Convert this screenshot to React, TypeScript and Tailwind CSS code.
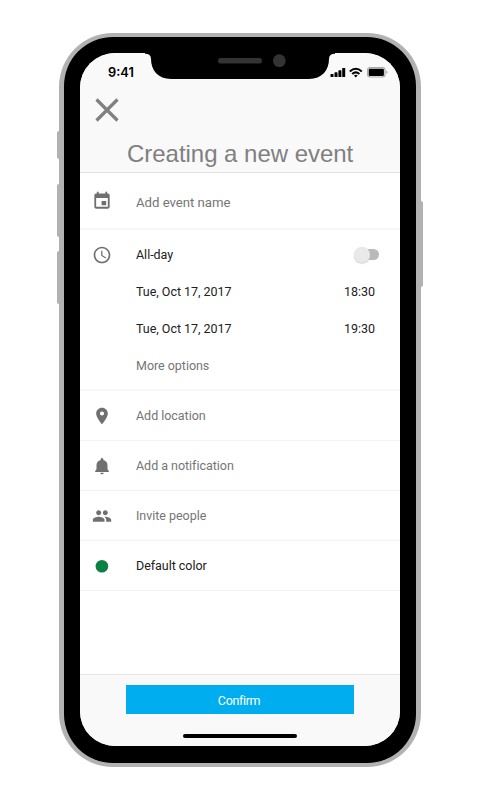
import type { ReactNode } from "react";

const paths = {
  event:
    "M17 12h-5.5v5H17v-5zM16 1v2H8V1H5.8v2H5c-1.3 0-2.2.9-2.2 2V19c0 1.1.9 2.2 2.2 2.2h14c1.1 0 2.2-.9 2.2-2.2V5c0-1.1-.9-2-2.2-2h-.8V1H16zm3 18H5V8.4h14V19z",
  clock:
    "M11.99 2C6.47 2 2 6.48 2 12s4.47 10 9.99 10C17.52 22 22 17.52 22 12S17.52 2 11.99 2zM12 20c-4.42 0-8-3.58-8-8s3.58-8 8-8 8 3.58 8 8-3.58 8-8 8zM12.5 7H11v6l5.25 3.15.75-1.23-4.5-2.67z",
  place:
    "M12 2C8.13 2 5 5.13 5 9c0 5.25 7 13 7 13s7-7.75 7-13c0-3.87-3.13-7-7-7zm0 9.5a2.5 2.5 0 0 1 0-5 2.5 2.5 0 0 1 0 5z",
  bell: "M12 22c1.1 0 2-.9 2-2h-4c0 1.1.89 2 2 2zm6.6-6v-5.2c0-3.07-2.1-5.44-5-6.12V4c0-.83-.77-1.6-1.6-1.6s-1.6.77-1.6 1.6v.68c-2.9.68-5 3.05-5 6.12V16L3.8 18v1.2h16.4V18l-1.6-2z",
  people:
    "M16 11c1.66 0 2.99-1.34 2.99-3S17.66 5 16 5c-1.66 0-3 1.34-3 3s1.34 3 3 3zm-8 0c1.66 0 2.99-1.34 2.99-3S9.66 5 8 5C6.34 5 5 6.34 5 8s1.34 3 3 3zm0 2c-2.33 0-7 1.17-7 3.5V19h14v-2.5c0-2.33-4.67-3.5-7-3.5zm8 0c-.29 0-.62.02-.97.05 1.16.84 1.97 1.97 1.97 3.45V19h6v-2.5c0-2.33-4.67-3.5-7-3.5z",
};

function Icon({ name, className = "mt-px" }: { name: keyof typeof paths; className?: string }) {
  return (
    <svg viewBox="0 0 24 24" className={`size-5 fill-[#707070] ${className}`}>
      <path d={paths[name]} />
    </svg>
  );
}

function Row({ icon, children, className }: { icon?: ReactNode; children: ReactNode; className: string }) {
  return (
    <div className={`flex items-center pr-[25px] ${className}`}>
      <div className="flex w-14 shrink-0 pl-3">{icon}</div>
      {children}
    </div>
  );
}

function StatusBar() {
  return (
    <div className="flex h-[38px] items-start justify-between pl-7 pr-3">
      <span className="pt-[12px] font-['Inter'] text-[12.8px] leading-4 font-semibold text-black">9:41</span>
      <svg width="58" height="12" viewBox="0 0 58 12" className="mt-[14px]">
        <g fill="#000">
          <rect x="0.5" y="7" width="3" height="3" rx=".6" />
          <rect x="4.5" y="5.3" width="3" height="4.7" rx=".6" />
          <rect x="8.4" y="3.3" width="3" height="6.7" rx=".6" />
          <rect x="12.2" y="1" width="3" height="9" rx=".6" />
        </g>
        <g fill="none" stroke="#000" strokeWidth="2">
          <path d="M19.8 4.4Q25.8-.8 31.8 4.4" />
          <path d="M22.2 7Q25.8 3.8 29.4 7" />
        </g>
        <path d="M23.9 8.4Q25.8 6.9 27.7 8.4L25.8 10.5Z" />
        <rect x="37.6" y=".6" width="17.4" height="9.4" rx="2.4" fill="#f8f8f8" stroke="#aaa" strokeWidth="1.2" />
        <rect x="38.7" y="1.7" width="15.2" height="7.2" rx="1.2" />
        <path d="M56.2 3.6v3.4q1.4-.7 1.4-1.7t-1.4-1.7z" fill="#aaa" />
      </svg>
    </div>
  );
}

export default function App() {
  return (
    <main className="relative flex h-[800px] w-[480px] items-center justify-center bg-white font-['Roboto','Liberation_Sans',sans-serif]">
      <div className="absolute top-[131px] left-[57px] h-7 w-1 rounded-l-[2px] bg-[#b2b2b2]" />
      <div className="absolute top-[184px] left-[57px] h-[53px] w-1 rounded-l-[2px] bg-[#b2b2b2]" />
      <div className="absolute top-[251px] left-[57px] h-[53px] w-1 rounded-l-[2px] bg-[#b2b2b2]" />
      <div className="absolute top-[201px] left-[419px] h-[86px] w-1 rounded-r-[2px] bg-[#b2b2b2]" />
      <div className="relative h-[734px] w-[362px] rounded-[54px] bg-[#b2b2b2] px-[5px] py-1">
        <div className="h-full rounded-[49px] bg-black px-4 pt-4 pb-[17px]">
          <div className="relative flex h-[693px] flex-col overflow-hidden rounded-[35px] bg-white">
            <svg width="190" height="27" viewBox="-4 0 190 27" className="absolute top-0 left-[65px]">
              <path d="M-4 0H186V.8Q180 .8 180 6C180 17 173 26 160 26H22C9 26 2 17 2 6Q2 .8-4 .8Z" />
              <rect x="69" y="5" width="44" height="5.5" rx="2.7" fill="#333" />
              <circle cx="130.3" cy="7.7" r="6.4" fill="#333" />
            </svg>
            <header className="flex h-[120px] shrink-0 flex-col border-b border-[#e2e2e2] bg-[#f9f9f9]">
              <StatusBar />
              <svg width="24" height="24" viewBox="0 0 24 24" className="mt-[7px] ml-[15px] shrink-0">
                <path d="M1.5 1.5l21 21m0-21l-21 21" stroke="#808080" strokeWidth="3.2" />
              </svg>
              <h1 className="mt-[18px] ml-[47px] font-['Liberation_Sans',Arial,sans-serif] text-[24px] leading-7 tracking-[-0.03px] whitespace-nowrap text-[#808080]">
                Creating a new event
              </h1>
            </header>
            <div className="flex-1 text-[12.5px] leading-5 tracking-[-0.03px] text-[#757575]">
              <Row icon={<Icon name="event" />} className="h-[57px] border-b-2 border-[#f7f7f7]">
                <span className="pt-[4px] text-[13.2px]">Add event name</span>
              </Row>
              <section className="h-[161px] border-b-2 border-[#f7f7f7] pt-[6px] text-[#212121]">
                <Row icon={<Icon name="clock" className="mt-0" />} className="h-[37px]">
                  <span>All-day</span>
                  <div className="relative mr-[-4px] ml-auto flex h-[11px] w-[22px] items-center rounded-full bg-[#b9b9b9]">
                    <div className="-ml-[3px] size-4 shrink-0 rounded-full bg-[#e9e9e9] shadow-[0_0.5px_1px_#bbb]" />
                  </div>
                </Row>
                <Row className="h-[37px]">
                  <span>Tue, Oct 17, 2017</span>
                  <span className="ml-auto">18:30</span>
                </Row>
                <Row className="h-[37px]">
                  <span>Tue, Oct 17, 2017</span>
                  <span className="ml-auto">19:30</span>
                </Row>
                <Row className="h-[37px] text-[#757575]">More options</Row>
              </section>
              <Row icon={<Icon name="place" />} className="h-[50px] border-b border-[#f4f4f4]">Add location</Row>
              <Row icon={<Icon name="bell" />} className="h-[50px] border-b border-[#f4f4f4]">Add a notification</Row>
              <Row icon={<Icon name="people" />} className="h-[50px] border-b border-[#f4f4f4]">Invite people</Row>
              <Row
                icon={
                  <svg viewBox="0 0 20 20" className="mt-px size-5 fill-[#0b8043]">
                    <circle cx="9.9" cy="10.2" r="6.3" />
                  </svg>
                }
                className="h-[50px] border-b border-[#f4f4f4] text-[#212121]"
              >
                Default color
              </Row>
            </div>
            <footer className="flex h-[72px] shrink-0 flex-col items-center border-t border-[#e5e5e5] bg-[#f9f9f9] pt-[10px]">
              <button className="h-[29px] w-[228px] bg-[#00aeef] pt-0.5 pr-0.5 text-[12.5px] leading-5 tracking-[-0.35px] text-white">
                Confirm
              </button>
              <div className="mt-5 h-1 w-[114px] rounded-full bg-black" />
            </footer>
          </div>
        </div>
      </div>
    </main>
  );
}
